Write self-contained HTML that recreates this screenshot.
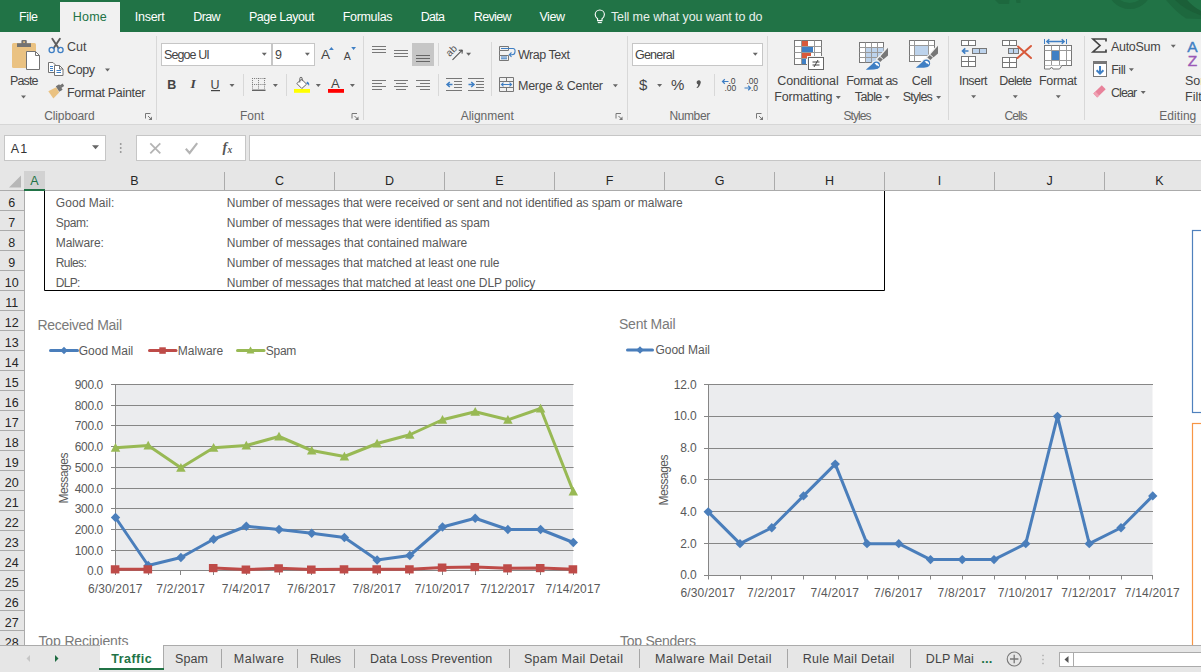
<!DOCTYPE html>
<html><head><meta charset="utf-8"><title>Excel</title>
<style>
html,body{margin:0;padding:0;}
body{width:1201px;height:672px;overflow:hidden;position:relative;background:#fff;font-family:"Liberation Sans",sans-serif;font-size:12px;color:#444;}
.a{position:absolute;}
.t{position:absolute;white-space:nowrap;line-height:16px;}
svg{display:block;}
</style></head><body>
<div id="top" class="a" style="left:0px;top:0px;width:1201px;height:32px;background:#217346;overflow:hidden;">
<svg class="a" style="left:0;top:0" width="1201" height="32" viewBox="0 0 1201 32"><g fill="#1d683e"><path d="M995 0h14.500l-.5 4h-10z"/><path d="M1016 0h4.500v3h-4z"/></g><circle cx="1129.700" cy="-13.500" r="19.500" fill="none" stroke="#1d683e" stroke-width="6"/><path d="M1166 0Q1176 12 1186 18.500L1201 19V11Q1193 7 1187 0z" fill="#1d683e"/><path d="M1175 0Q1185 10 1201 15.500V11Q1193 7 1187 0z" fill="#1b5f38"/><rect x="60" y="2" width="60" height="30" fill="#f1f1f1"/><g fill="none" stroke="#fff" stroke-width="1.1" transform="translate(1.3,1.1)"><path d="M596.3 19.5v-1.8c-1.6-1.2-2.4-2.5-2.4-4.2a4.6 4.6 0 0 1 9.2 0c0 1.7-.8 3-2.4 4.2v1.8z"/><path d="M596.5 21.5h4"/></g></svg>
<div class="t" style="left:19.00px;top:9.00px;font-size:12.5px;letter-spacing:-0.385px;color:#fff;">File</div>
<div class="t" style="left:72.75px;top:9.00px;font-size:12.5px;letter-spacing:0.219px;color:#217346;">Home</div>
<div class="t" style="left:134.75px;top:9.00px;font-size:12.5px;letter-spacing:-0.253px;color:#fff;">Insert</div>
<div class="t" style="left:193.25px;top:9.00px;font-size:12.5px;letter-spacing:-0.641px;color:#fff;">Draw</div>
<div class="t" style="left:248.90px;top:9.00px;font-size:12.5px;letter-spacing:-0.460px;color:#fff;">Page Layout</div>
<div class="t" style="left:342.80px;top:9.00px;font-size:12.5px;letter-spacing:-0.342px;color:#fff;">Formulas</div>
<div class="t" style="left:420.70px;top:9.00px;font-size:12.5px;letter-spacing:-0.735px;color:#fff;">Data</div>
<div class="t" style="left:473.80px;top:9.00px;font-size:12.5px;letter-spacing:-0.660px;color:#fff;">Review</div>
<div class="t" style="left:539.40px;top:9.00px;font-size:12.5px;letter-spacing:-0.392px;color:#fff;">View</div>
<div class="t" style="left:610.90px;top:9.00px;font-size:12.5px;letter-spacing:-0.102px;color:#e8f0eb;">Tell me what you want to do</div>
</div>
<div id="ribbon" class="a" style="left:0px;top:32px;width:1201px;height:93px;background:#f1f1f1;overflow:hidden;">
<svg class="a" style="left:0;top:0" width="1201" height="93" viewBox="0 32 1201 93"><rect x="0" y="124" width="1201" height="1" fill="#d6d6d6"/><rect x="156" y="36" width="1" height="84" fill="#d8d8d8"/><rect x="363" y="36" width="1" height="84" fill="#d8d8d8"/><rect x="627" y="36" width="1" height="84" fill="#d8d8d8"/><rect x="767" y="36" width="1" height="84" fill="#d8d8d8"/><rect x="948" y="36" width="1" height="84" fill="#d8d8d8"/><rect x="1084" y="36" width="1" height="84" fill="#d8d8d8"/><rect x="243" y="74" width="1" height="22" fill="#d8d8d8"/><rect x="286" y="74" width="1" height="22" fill="#d8d8d8"/><rect x="438" y="43" width="1" height="23" fill="#d8d8d8"/><rect x="438" y="74" width="1" height="22" fill="#d8d8d8"/><rect x="491" y="42" width="1" height="54" fill="#d8d8d8"/><rect x="714" y="74" width="1" height="22" fill="#d8d8d8"/><rect x="12" y="43" width="24" height="25" rx="1.5" fill="#eac282"/><path d="M17 43.3h14v3.7h-14z M21.4 41a1 1 0 0 1 1-1h3.4a1 1 0 0 1 1 1v2.5h-5.4z" fill="#737373"/><rect x="23.2" y="41.3" width="1.8" height="1.6" fill="#eac282"/><path d="M26.5 51.5h9l4 4v14h-13z" fill="#fff" stroke="#737373" stroke-width="1"/><path d="M35.5 51.5v4h4" fill="none" stroke="#737373" stroke-width="1"/><path d="M21.00 95.50h5l-2.5 3z" fill="#666"/><g fill="none" stroke-linecap="round"><path d="M52.3 38.7L58.6 48.2M59.9 38.7L53.6 48.2" stroke="#5e5e5e" stroke-width="1.9"/><circle cx="51.7" cy="50" r="2.6" stroke="#3f7fc4" stroke-width="1.3"/><circle cx="60.5" cy="50" r="2.6" stroke="#3f7fc4" stroke-width="1.3"/></g><g fill="#fff" stroke="#737373" stroke-width="1"><path d="M48.5 62.5h4.5l2.5 2.5v7.5h-7z"/><path d="M54.5 65.5h5l3.5 3.5v6.5h-8.5z"/></g><path d="M59.5 65.5v3.5h3.5" fill="none" stroke="#737373" stroke-width="1"/><g stroke="#3f7fc4" stroke-width="1"><path d="M50 66.5h3M50 68.5h3M50 70.5h3M56.5 70.5h4.5M56.5 72.5h4.5"/></g><path d="M105.00 68.50h5l-2.5 3z" fill="#666"/><path d="M48.3 91.2L56.2 87.2L59.2 92.6L53.4 98.6z" fill="#eac282"/><path d="M55.8 86.2l3.4-2l3.4 5.6l-3.4 2z" fill="#737373"/><path d="M59.6 85.4l3-1.9l1.6 2.6l-3 1.9z" fill="#737373"/><path d="M145.50 118.50V113.50H150.50" fill="none" stroke="#777" stroke-width="1"/><path d="M148.00 116.00L151.50 119.50" stroke="#777" stroke-width="1"/><path d="M152.00 116.50V120.00H148.50z" fill="#777"/><rect x="161.5" y="43.5" width="110" height="22" fill="#fff" stroke="#c6c6c6"/><rect x="272.5" y="43.5" width="42" height="22" fill="#fff" stroke="#c6c6c6"/><path d="M261.80 52.80h5l-2.5 3z" fill="#666"/><path d="M304.90 52.80h5l-2.5 3z" fill="#666"/><path d="M329 50l2.4-3l2.4 3z" fill="#3f7fc4"/><path d="M351.2 47h4.8l-2.4 3z" fill="#3f7fc4"/><rect x="211" y="90" width="9" height="1.2" fill="#444"/><path d="M229.50 84.00h5l-2.5 3z" fill="#666"/><g stroke="#777" stroke-width="1" stroke-dasharray="1 1.1"><path d="M252 78.5h13.5"/><path d="M252 84.5h13.5"/><path d="M252.5 78v11"/><path d="M258.5 78v11"/><path d="M264.5 78v11"/></g><rect x="252" y="89.6" width="13.5" height="1.3" fill="#555"/><path d="M272.90 84.00h5l-2.5 3z" fill="#666"/><rect x="294" y="89" width="16" height="3.8" fill="#ffff00"/><path d="M301.6 79.2l5 5l-4.8 4.3l-5-5z" fill="#fff" stroke="#666" stroke-width="1"/><path d="M299.8 82.5v-4a1.2 1.2 0 0 1 2.4 0v2.6" fill="none" stroke="#666" stroke-width="1"/><path d="M307 81.5c2 .6 2.8 2.4 2 4.6c-.4-1.4-1.2-2.2-2.6-2.6z" fill="#3f7fc4"/><path d="M315.80 84.00h5l-2.5 3z" fill="#666"/><rect x="328" y="89" width="16" height="3.8" fill="#ff0000"/><path d="M349.90 84.00h5l-2.5 3z" fill="#666"/><path d="M352.00 118.50V113.50H357.00" fill="none" stroke="#777" stroke-width="1"/><path d="M354.50 116.00L358.00 119.50" stroke="#777" stroke-width="1"/><path d="M358.50 116.50V120.00H355.00z" fill="#777"/><rect x="372" y="46.0" width="14" height="1" fill="#777"/><rect x="372" y="49.0" width="14" height="1" fill="#777"/><rect x="372" y="52.0" width="14" height="1" fill="#777"/><rect x="394" y="50.0" width="14" height="1" fill="#777"/><rect x="394" y="53.0" width="14" height="1" fill="#777"/><rect x="394" y="56.0" width="14" height="1" fill="#777"/><rect x="412" y="43" width="22" height="23" fill="#c6c6c6"/><rect x="416" y="55.0" width="14" height="1" fill="#666"/><rect x="416" y="58.0" width="14" height="1" fill="#666"/><rect x="416" y="61.0" width="14" height="1" fill="#666"/><rect x="372" y="80.0" width="14" height="1" fill="#777"/><rect x="394" y="80.0" width="14" height="1" fill="#777"/><rect x="416" y="80.0" width="14" height="1" fill="#777"/><rect x="372" y="83.0" width="10" height="1" fill="#777"/><rect x="396" y="83.0" width="10" height="1" fill="#777"/><rect x="420" y="83.0" width="10" height="1" fill="#777"/><rect x="372" y="86.0" width="14" height="1" fill="#777"/><rect x="394" y="86.0" width="14" height="1" fill="#777"/><rect x="416" y="86.0" width="14" height="1" fill="#777"/><rect x="372" y="89.0" width="10" height="1" fill="#777"/><rect x="396" y="89.0" width="10" height="1" fill="#777"/><rect x="420" y="89.0" width="10" height="1" fill="#777"/><path d="M452.5 59.8L462.2 50.2M462.4 50l-3.6.4M462.4 50l-.4 3.6" stroke="#555" stroke-width="1.1" fill="none"/><path d="M466.10 52.80h5l-2.5 3z" fill="#666"/><rect x="446" y="78.0" width="16" height="1" fill="#777"/><rect x="446" y="90.0" width="16" height="1" fill="#777"/><rect x="454" y="81.0" width="8" height="1" fill="#777"/><rect x="454" y="84.0" width="8" height="1" fill="#777"/><rect x="454" y="87.0" width="8" height="1" fill="#777"/><path d="M452.5 84.5h-5.5M449.8 82l-2.8 2.5l2.8 2.5" stroke="#3f7fc4" stroke-width="1.5" fill="none"/><rect x="468" y="78.0" width="16" height="1" fill="#777"/><rect x="468" y="90.0" width="16" height="1" fill="#777"/><rect x="476" y="81.0" width="8" height="1" fill="#777"/><rect x="476" y="84.0" width="8" height="1" fill="#777"/><rect x="476" y="87.0" width="8" height="1" fill="#777"/><path d="M468.5 84.5h5.5M471.2 82l2.8 2.5l-2.8 2.5" stroke="#3f7fc4" stroke-width="1.5" fill="none"/><g fill="none" stroke="#777" stroke-width="1"><path d="M499.5 46.5h9v4h-9zM499.5 55.5h9v5h-9zM499.5 50.5v5"/></g><g fill="none" stroke="#3f7fc4" stroke-width="1.1"><path d="M501 48.5h12.2a1.8 1.8 0 0 1 1.8 1.8v1.4a3 3 0 0 1-3 3h-2.5M511.5 52.5l-2.2 2.2l2.2 2.2M501 57h6M501 58.8h6"/></g><g fill="none" stroke="#777" stroke-width="1"><path d="M499.5 77.5h14v14h-14zM499.5 81.5h14M499.5 87.5h14M506.5 77.5v4M506.5 87.5v4"/></g><path d="M501.5 84.5h10M503.5 82.7l-2 1.8l2 1.8M509.5 82.7l2 1.8l-2 1.8" fill="none" stroke="#3f7fc4" stroke-width="1.1"/><path d="M612.90 84.20h5l-2.5 3z" fill="#666"/><path d="M616.00 118.50V113.50H621.00" fill="none" stroke="#777" stroke-width="1"/><path d="M618.50 116.00L622.00 119.50" stroke="#777" stroke-width="1"/><path d="M622.50 116.50V120.00H619.00z" fill="#777"/><rect x="632.5" y="43.5" width="130" height="22" fill="#fff" stroke="#c6c6c6"/><path d="M752.80 52.80h5l-2.5 3z" fill="#666"/><path d="M657.10 84.00h5l-2.5 3z" fill="#666"/><path d="M696.600 82.300a2.100 2.100 0 1 1 3.900 1.100c-.4 1.900-1.400 3.400-3.100 4.700h-1.100c1.200-1.300 1.800-2.500 1.900-3.700a2.100 2.100 0 0 1-1.600-2.100z" fill="#555"/><path d="M722.5 81.5h6M724.8 79.3l-2.300 2.200l2.300 2.200" fill="none" stroke="#3f7fc4" stroke-width="1.2"/><path d="M744.5 88h6M748.2 85.800l2.300 2.200l-2.300 2.200" fill="none" stroke="#3f7fc4" stroke-width="1.2"/><path d="M756.50 118.50V113.50H761.50" fill="none" stroke="#777" stroke-width="1"/><path d="M759.00 116.00L762.50 119.50" stroke="#777" stroke-width="1"/><path d="M763.00 116.50V120.00H759.50z" fill="#777"/><rect x="794.5" y="40.500" width="27" height="24" fill="#fff" stroke="#777"/><path d="M794.500 46.5h27" stroke="#999" stroke-width="1"/><path d="M794.500 52.5h27" stroke="#999" stroke-width="1"/><path d="M794.500 58.5h27" stroke="#999" stroke-width="1"/><path d="M801.5 40.500v24" stroke="#999" stroke-width="1"/><path d="M814.5 40.500v24" stroke="#999" stroke-width="1"/><rect x="802" y="41" width="6" height="5" fill="#d8593a"/><rect x="802" y="47" width="11" height="5" fill="#3f7fc4"/><rect x="802" y="53" width="9" height="5" fill="#d8593a"/><rect x="802" y="59" width="4" height="5" fill="#3f7fc4"/><rect x="807" y="56" width="18" height="15" fill="#f1f1f1"/><rect x="808.500" y="57.500" width="15" height="12" fill="#fff" stroke="#666"/><path d="M812.500 62h7M812.500 65h7M818 60l-4 7" stroke="#444" stroke-width="1" fill="none"/><path d="M835.80 96.00h5l-2.5 3z" fill="#666"/><rect x="859.500" y="42.500" width="24" height="20" fill="#fff" stroke="#777"/><rect x="866" y="47" width="17.500" height="15" fill="#bdd3ec"/><path d="M859.500 47.5h24" stroke="#999" stroke-width="1"/><path d="M859.500 52.5h24" stroke="#999" stroke-width="1"/><path d="M859.500 57.5h24" stroke="#999" stroke-width="1"/><path d="M865.5 42.500v20" stroke="#999" stroke-width="1"/><path d="M871.5 42.500v20" stroke="#999" stroke-width="1"/><path d="M877.5 42.500v20" stroke="#999" stroke-width="1"/><g transform="translate(0,0)"><g fill="#f1f1f1" stroke="#f1f1f1" stroke-width="2.600" stroke-linejoin="round"><path d="M888 47.700V55.400L883.300 59.500L880.300 62L877.300 59.300L880.300 56.500Z"/><path d="M865.800 69.700L874 62.400L878 68.600Z"/><circle cx="876.400" cy="65.100" r="3.600"/><path d="M885.300 55V64.500H879.500z" stroke="none"/></g><path d="M865.800 69.700L874 62.400L878 68.800Q874 69.900 865.800 69.700Z" fill="#3f7fc4"/><circle cx="876.400" cy="65.100" r="3.700" fill="#3f7fc4"/><path d="M874.500 63.700a2.700 2.700 0 0 1 4.400 2.900c-.7-1-1.500-1.300-2.300-1.100c-.3-.9-1.100-1.600-2.100-1.800z" fill="#fff"/><path d="M888 47.700V55.400L883.300 59.500L880.300 56.500Z" fill="#777"/><path d="M877.300 59.300L880 56.700L883.200 59.100L880.300 62Z" fill="#777"/><path d="M879.600 56.200L883.600 59.700" stroke="#f1f1f1" stroke-width=".9"/></g><path d="M884.80 96.00h5l-2.5 3z" fill="#666"/><rect x="909.500" y="40.500" width="25" height="21" fill="#fff" stroke="#777"/><path d="M909.500 45.5h25" stroke="#999" stroke-width="1"/><path d="M909.500 55.5h25" stroke="#999" stroke-width="1"/><path d="M914.5 40.500v21" stroke="#999" stroke-width="1"/><path d="M928.5 40.500v21" stroke="#999" stroke-width="1"/><rect x="915" y="46" width="13" height="9" fill="#bdd3ec"/><g transform="translate(50,-1.9)"><g fill="#f1f1f1" stroke="#f1f1f1" stroke-width="2.600" stroke-linejoin="round"><path d="M888 47.700V55.400L883.300 59.500L880.300 62L877.300 59.300L880.300 56.500Z"/><path d="M865.800 69.700L874 62.400L878 68.600Z"/><circle cx="876.400" cy="65.100" r="3.600"/><path d="M885.300 55V64.500H879.500z" stroke="none"/></g><path d="M865.800 69.700L874 62.400L878 68.800Q874 69.900 865.800 69.700Z" fill="#3f7fc4"/><circle cx="876.400" cy="65.100" r="3.700" fill="#3f7fc4"/><path d="M874.500 63.700a2.700 2.700 0 0 1 4.400 2.900c-.7-1-1.500-1.300-2.300-1.100c-.3-.9-1.100-1.600-2.100-1.800z" fill="#fff"/><path d="M888 47.700V55.400L883.300 59.500L880.300 56.500Z" fill="#777"/><path d="M877.300 59.300L880 56.700L883.200 59.100L880.300 62Z" fill="#777"/><path d="M879.600 56.200L883.600 59.700" stroke="#f1f1f1" stroke-width=".9"/></g><path d="M936.10 96.00h5l-2.5 3z" fill="#666"/><rect x="961.5" y="40.5" width="14" height="5" fill="#fff" stroke="#777"/><path d="M968.5 40.5v5" stroke="#777"/><rect x="972.5" y="48.5" width="14" height="5" fill="#bdd3ec" stroke="#777"/><path d="M979.5 48.5v5" stroke="#777"/><rect x="961.5" y="56.5" width="14" height="10" fill="#fff" stroke="#777"/><path d="M968.5 56.5v10" stroke="#777"/><path d="M961.5 61.5h14" stroke="#777"/><path d="M962.500 51h6M965.300 48.300l-2.800 2.700l2.800 2.700" fill="none" stroke="#3f7fc4" stroke-width="1.600"/><rect x="1002.5" y="40.5" width="14" height="5" fill="#fff" stroke="#777"/><path d="M1009.5 40.5v5" stroke="#777"/><rect x="1008.5" y="48.5" width="10" height="5" fill="#bdd3ec" stroke="#777"/><path d="M1013.5 48.5v5" stroke="#777"/><rect x="1002.5" y="57.5" width="14" height="10" fill="#fff" stroke="#777"/><path d="M1009.5 57.5v10" stroke="#777"/><path d="M1002.5 62.5h14" stroke="#777"/><path d="M1017.500 58l13.500-12M1018 46.500l13 11.500" stroke="#d8593a" stroke-width="2" fill="none" stroke-linecap="round"/><path d="M1044.500 39v5M1066.500 39v5" fill="none" stroke="#3f7fc4" stroke-width="1"/><path d="M1047 41.500h17M1049.300 39.200l-2.500 2.300l2.500 2.300M1061.700 39.200l2.500 2.300l-2.500 2.300" fill="none" stroke="#3f7fc4" stroke-width="1.400"/><rect x="1044.500" y="45.500" width="27" height="20" fill="#fff" stroke="#777"/><path d="M1051.500 45.500v20M1059.500 45.500v20M1066.500 45.500v20M1044.500 50.500h27M1044.500 60.500h27" stroke="#999"/><rect x="1052" y="51" width="7" height="9" fill="#3f7fc4"/><path d="M1044.500 65.500v3.500h5.500l1.500-2l1.500 2h6.500l2.500-3.500" fill="#fff" stroke="#777"/><path d="M971.10 95.30h5l-2.5 3z" fill="#666"/><path d="M1012.80 95.30h5l-2.5 3z" fill="#666"/><path d="M1055.80 95.30h5l-2.5 3z" fill="#666"/><path d="M1106 41.500v-2.500h-13l7 6.500l-7 6.500h13v-2.500" fill="none" stroke="#444" stroke-width="1.700"/><path d="M1170.80 44.80h5l-2.5 3z" fill="#666"/><rect x="1093.500" y="61.500" width="13" height="15" fill="#fff" stroke="#777"/><rect x="1093" y="61" width="14" height="3" fill="#777"/><path d="M1100 66v7.500M1096.600 70.300l3.400 3.400l3.400-3.400" fill="none" stroke="#3f7fc4" stroke-width="2"/><path d="M1128.90 68.20h5l-2.5 3z" fill="#666"/><path d="M1093.300 93.500l8.500-8.200l3.900 4l-8.500 8.200z" fill="#e8829a"/><path d="M1093.300 93.500l2.200-2.100l3.900 4l-2.200 2.100z" fill="#f0a0b2"/><path d="M1140.70 91.00h5l-2.5 3z" fill="#666"/></svg>
<div class="t" style="left:10.00px;top:41.00px;font-size:12.5px;letter-spacing:-0.867px;color:#444;">Paste</div>
<div class="t" style="left:67.00px;top:7.00px;font-size:12.5px;letter-spacing:0.023px;color:#444;">Cut</div>
<div class="t" style="left:67.00px;top:30.00px;font-size:12.5px;letter-spacing:-0.396px;color:#444;">Copy</div>
<div class="t" style="left:67.00px;top:53.00px;font-size:12.5px;letter-spacing:-0.321px;color:#444;">Format Painter</div>
<div class="t" style="left:44.20px;top:76.00px;font-size:12px;letter-spacing:-0.109px;color:#666;">Clipboard</div>
<div class="t" style="left:164.00px;top:14.90px;font-size:12.5px;letter-spacing:-0.904px;color:#444;">Segoe UI</div>
<div class="t" style="left:275.00px;top:14.90px;font-size:12.5px;color:#444;">9</div>
<div class="t" style="left:167.20px;top:44.70px;font-size:12.5px;color:#444;font-weight:bold;">B</div>
<div class="t" style="left:190.50px;top:44.20px;font-size:13.5px;color:#444;font-weight:bold;font-style:italic;font-family:'Liberation Serif',serif;">I</div>
<div class="t" style="left:210.60px;top:44.70px;font-size:12.5px;color:#444;">U</div>
<div class="t" style="left:321.00px;top:15.10px;font-size:13.5px;color:#444;">A</div>
<div class="t" style="left:343.70px;top:15.60px;font-size:10.5px;color:#444;">A</div>
<div class="t" style="left:331.00px;top:43.90px;font-size:13px;color:#444;">A</div>
<div class="t" style="left:240.00px;top:75.80px;font-size:12px;letter-spacing:-0.005px;color:#666;">Font</div>
<div class="t" style="left:0.00px;top:-43.50px;font-size:10px;color:#555;left:446px;top:10.5px;transform:rotate(-45deg);transform-origin:50% 50%;">ab</div>
<div class="t" style="left:518.00px;top:14.70px;font-size:12.5px;letter-spacing:-0.477px;color:#444;">Wrap Text</div>
<div class="t" style="left:518.00px;top:45.90px;font-size:12.5px;letter-spacing:-0.249px;color:#444;">Merge &amp; Center</div>
<div class="t" style="left:460.80px;top:75.60px;font-size:12px;letter-spacing:-0.047px;color:#666;">Alignment</div>
<div class="t" style="left:635.00px;top:14.90px;font-size:12.5px;letter-spacing:-0.781px;color:#444;">General</div>
<div class="t" style="left:639.00px;top:44.50px;font-size:15px;color:#444;">$</div>
<div class="t" style="left:671.00px;top:45.10px;font-size:15px;color:#444;">%</div>
<div class="t" style="left:728.50px;top:41.00px;font-size:8.5px;color:#444;">.0</div>
<div class="t" style="left:724.50px;top:48.00px;font-size:8.5px;color:#444;">.00</div>
<div class="t" style="left:746.50px;top:41.00px;font-size:8.5px;color:#444;">.00</div>
<div class="t" style="left:751.00px;top:48.00px;font-size:8.5px;color:#444;">.0</div>
<div class="t" style="left:669.40px;top:75.60px;font-size:12px;letter-spacing:-0.378px;color:#666;">Number</div>
<div class="t" style="left:777.25px;top:41.00px;font-size:12.5px;letter-spacing:-0.105px;color:#444;">Conditional</div>
<div class="t" style="left:774.20px;top:56.80px;font-size:12.5px;letter-spacing:-0.172px;color:#444;">Formatting</div>
<div class="t" style="left:846.30px;top:41.00px;font-size:12.5px;letter-spacing:-0.558px;color:#444;">Format as</div>
<div class="t" style="left:854.80px;top:56.80px;font-size:12.5px;letter-spacing:-0.598px;color:#444;">Table</div>
<div class="t" style="left:911.85px;top:41.00px;font-size:12.5px;letter-spacing:-0.416px;color:#444;">Cell</div>
<div class="t" style="left:902.80px;top:56.80px;font-size:12.5px;letter-spacing:-0.809px;color:#444;">Styles</div>
<div class="t" style="left:843.40px;top:75.60px;font-size:12px;letter-spacing:-0.898px;color:#666;">Styles</div>
<div class="t" style="left:959.00px;top:40.90px;font-size:12.5px;letter-spacing:-0.533px;color:#444;">Insert</div>
<div class="t" style="left:999.30px;top:40.90px;font-size:12.5px;letter-spacing:-0.688px;color:#444;">Delete</div>
<div class="t" style="left:1039.00px;top:40.90px;font-size:12.5px;letter-spacing:-0.319px;color:#444;">Format</div>
<div class="t" style="left:1004.40px;top:75.60px;font-size:12px;letter-spacing:-0.868px;color:#666;">Cells</div>
<div class="t" style="left:1111.00px;top:7.00px;font-size:12.5px;letter-spacing:-0.304px;color:#444;">AutoSum</div>
<div class="t" style="left:1111.20px;top:29.90px;font-size:12.5px;letter-spacing:-0.456px;color:#444;">Fill</div>
<div class="t" style="left:1111.00px;top:53.00px;font-size:12.5px;letter-spacing:-0.919px;color:#444;">Clear</div>
<div class="t" style="left:1187.20px;top:7.10px;font-size:15.5px;color:#3f7fc4;-webkit-text-stroke:.4px #3f7fc4;">A</div>
<div class="t" style="left:1187.80px;top:21.30px;font-size:15.5px;color:#9b59b6;-webkit-text-stroke:.4px #9b59b6;">Z</div>
<div class="t" style="left:1185.00px;top:40.80px;font-size:12.5px;color:#444;">Sort</div>
<div class="t" style="left:1185.00px;top:57.00px;font-size:12.5px;color:#444;">Filter</div>
<div class="t" style="left:1159.30px;top:76.00px;font-size:12px;letter-spacing:0.049px;color:#666;">Editing</div>
</div>
<div id="fbar" class="a" style="left:0px;top:125px;width:1201px;height:46px;background:#e6e6e6;overflow:hidden;">
<svg class="a" style="left:0;top:0" width="1201" height="46" viewBox="0 125 1201 46"><rect x="4.500" y="135.500" width="101" height="25" fill="#fff" stroke="#c6c6c6"/><rect x="136.500" y="135.500" width="109" height="25" fill="#fff" stroke="#c6c6c6"/><rect x="249.500" y="135.500" width="960" height="25" fill="#fff" stroke="#c6c6c6"/><path d="M92 145.300h7l-3.500 4z" fill="#666"/><rect x="119.900" y="143.2" width="1.600" height="1.600" fill="#8c8c8c"/><rect x="119.900" y="147.2" width="1.600" height="1.600" fill="#8c8c8c"/><rect x="119.900" y="151.2" width="1.600" height="1.600" fill="#8c8c8c"/><path d="M150.300 143.300l10 10M160.300 143.300l-10 10" stroke="#b4b4b4" stroke-width="1.800" fill="none"/><path d="M185.800 148.800l3.800 4.200l7.600-9.800" stroke="#b4b4b4" stroke-width="2.100" fill="none"/></svg>
<div class="t" style="left:10.70px;top:15.60px;font-size:12.5px;letter-spacing:1.303px;color:#333;">A1</div>
<div class="t" style="left:222.50px;top:15.00px;font-size:14px;color:#555;font-weight:bold;font-style:italic;font-family:'Liberation Serif',serif;">f</div>
<div class="t" style="left:227.50px;top:17.00px;font-size:9.5px;color:#555;font-weight:bold;font-style:italic;font-family:'Liberation Serif',serif;">x</div>
</div>
<div id="colh" class="a" style="left:0px;top:171px;width:1201px;height:20px;background:#e6e6e6;overflow:hidden;">
<svg class="a" style="left:0;top:0" width="1201" height="20" viewBox="0 171 1201 20"><rect x="0" y="190" width="1201" height="1" fill="#ababab"/><rect x="24" y="171" width="21" height="18" fill="#d2d2d2"/><rect x="24" y="189" width="21" height="2" fill="#217346"/><path d="M21 175.500v12h-12z" fill="#b7b7b7"/><rect x="224" y="172" width="1" height="18" fill="#ababab"/><rect x="334" y="172" width="1" height="18" fill="#ababab"/><rect x="444" y="172" width="1" height="18" fill="#ababab"/><rect x="554" y="172" width="1" height="18" fill="#ababab"/><rect x="664" y="172" width="1" height="18" fill="#ababab"/><rect x="774" y="172" width="1" height="18" fill="#ababab"/><rect x="884" y="172" width="1" height="18" fill="#ababab"/><rect x="994" y="172" width="1" height="18" fill="#ababab"/><rect x="1104" y="172" width="1" height="18" fill="#ababab"/></svg>
<div class="t" style="left:30.33px;top:2.00px;font-size:12.5px;color:#217346;">A</div>
<div class="t" style="left:130.33px;top:2.00px;font-size:12.5px;color:#262626;">B</div>
<div class="t" style="left:274.98px;top:2.00px;font-size:12.5px;color:#262626;">C</div>
<div class="t" style="left:384.98px;top:2.00px;font-size:12.5px;color:#262626;">D</div>
<div class="t" style="left:495.33px;top:2.00px;font-size:12.5px;color:#262626;">E</div>
<div class="t" style="left:605.68px;top:2.00px;font-size:12.5px;color:#262626;">F</div>
<div class="t" style="left:714.63px;top:2.00px;font-size:12.5px;color:#262626;">G</div>
<div class="t" style="left:824.98px;top:2.00px;font-size:12.5px;color:#262626;">H</div>
<div class="t" style="left:937.76px;top:2.00px;font-size:12.5px;color:#262626;">I</div>
<div class="t" style="left:1046.38px;top:2.00px;font-size:12.5px;color:#262626;">J</div>
<div class="t" style="left:1155.33px;top:2.00px;font-size:12.5px;color:#262626;">K</div>
</div>
<div id="rowh" class="a" style="left:0px;top:191px;width:25px;height:454px;background:#e6e6e6;overflow:hidden;">
<svg class="a" style="left:0;top:0" width="25" height="454" viewBox="0 191 25 454"><rect x="24" y="191" width="1" height="454" fill="#ababab"/><rect x="0" y="210" width="24" height="1" fill="#ababab"/><rect x="0" y="230" width="24" height="1" fill="#ababab"/><rect x="0" y="250" width="24" height="1" fill="#ababab"/><rect x="0" y="270" width="24" height="1" fill="#ababab"/><rect x="0" y="290" width="24" height="1" fill="#ababab"/><rect x="0" y="310" width="24" height="1" fill="#ababab"/><rect x="0" y="330" width="24" height="1" fill="#ababab"/><rect x="0" y="350" width="24" height="1" fill="#ababab"/><rect x="0" y="370" width="24" height="1" fill="#ababab"/><rect x="0" y="390" width="24" height="1" fill="#ababab"/><rect x="0" y="410" width="24" height="1" fill="#ababab"/><rect x="0" y="430" width="24" height="1" fill="#ababab"/><rect x="0" y="450" width="24" height="1" fill="#ababab"/><rect x="0" y="470" width="24" height="1" fill="#ababab"/><rect x="0" y="490" width="24" height="1" fill="#ababab"/><rect x="0" y="510" width="24" height="1" fill="#ababab"/><rect x="0" y="530" width="24" height="1" fill="#ababab"/><rect x="0" y="550" width="24" height="1" fill="#ababab"/><rect x="0" y="570" width="24" height="1" fill="#ababab"/><rect x="0" y="590" width="24" height="1" fill="#ababab"/><rect x="0" y="610" width="24" height="1" fill="#ababab"/><rect x="0" y="630" width="24" height="1" fill="#ababab"/><rect x="0" y="650" width="24" height="1" fill="#ababab"/></svg>
<div class="t" style="left:8.32px;top:3.70px;font-size:12.5px;color:#262626;">6</div>
<div class="t" style="left:8.32px;top:23.70px;font-size:12.5px;color:#262626;">7</div>
<div class="t" style="left:8.32px;top:43.70px;font-size:12.5px;color:#262626;">8</div>
<div class="t" style="left:8.32px;top:63.70px;font-size:12.5px;color:#262626;">9</div>
<div class="t" style="left:4.85px;top:83.70px;font-size:12.5px;color:#262626;">10</div>
<div class="t" style="left:5.31px;top:103.70px;font-size:12.5px;color:#262626;">11</div>
<div class="t" style="left:4.85px;top:123.70px;font-size:12.5px;color:#262626;">12</div>
<div class="t" style="left:4.85px;top:143.70px;font-size:12.5px;color:#262626;">13</div>
<div class="t" style="left:4.85px;top:163.70px;font-size:12.5px;color:#262626;">14</div>
<div class="t" style="left:4.85px;top:183.70px;font-size:12.5px;color:#262626;">15</div>
<div class="t" style="left:4.85px;top:203.70px;font-size:12.5px;color:#262626;">16</div>
<div class="t" style="left:4.85px;top:223.70px;font-size:12.5px;color:#262626;">17</div>
<div class="t" style="left:4.85px;top:243.70px;font-size:12.5px;color:#262626;">18</div>
<div class="t" style="left:4.85px;top:263.70px;font-size:12.5px;color:#262626;">19</div>
<div class="t" style="left:4.85px;top:283.70px;font-size:12.5px;color:#262626;">20</div>
<div class="t" style="left:4.85px;top:303.70px;font-size:12.5px;color:#262626;">21</div>
<div class="t" style="left:4.85px;top:323.70px;font-size:12.5px;color:#262626;">22</div>
<div class="t" style="left:4.85px;top:343.70px;font-size:12.5px;color:#262626;">23</div>
<div class="t" style="left:4.85px;top:363.70px;font-size:12.5px;color:#262626;">24</div>
<div class="t" style="left:4.85px;top:383.70px;font-size:12.5px;color:#262626;">25</div>
<div class="t" style="left:4.85px;top:403.70px;font-size:12.5px;color:#262626;">26</div>
<div class="t" style="left:4.85px;top:423.70px;font-size:12.5px;color:#262626;">27</div>
<div class="t" style="left:4.85px;top:443.70px;font-size:12.5px;color:#262626;">28</div>
</div>
<div id="sheet" class="a" style="left:25px;top:191px;width:1176px;height:454px;background:#fff;overflow:hidden;">
<svg class="a" style="left:0;top:0" width="1176" height="454" viewBox="25 191 1176 454"><rect x="115" y="384" width="458" height="187" fill="#ebecee"/><line x1="111" x2="573.6" y1="384.50" y2="384.50" stroke="#868686" stroke-width="1"/><line x1="111" x2="573.6" y1="405.50" y2="405.50" stroke="#868686" stroke-width="1"/><line x1="111" x2="573.6" y1="425.50" y2="425.50" stroke="#868686" stroke-width="1"/><line x1="111" x2="573.6" y1="446.50" y2="446.50" stroke="#868686" stroke-width="1"/><line x1="111" x2="573.6" y1="467.50" y2="467.50" stroke="#868686" stroke-width="1"/><line x1="111" x2="573.6" y1="488.50" y2="488.50" stroke="#868686" stroke-width="1"/><line x1="111" x2="573.6" y1="508.50" y2="508.50" stroke="#868686" stroke-width="1"/><line x1="111" x2="573.6" y1="529.50" y2="529.50" stroke="#868686" stroke-width="1"/><line x1="111" x2="573.6" y1="550.50" y2="550.50" stroke="#868686" stroke-width="1"/><line x1="111" x2="573.6" y1="570.50" y2="570.50" stroke="#868686" stroke-width="1"/><line x1="115.5" x2="115.5" y1="384" y2="571" stroke="#868686" stroke-width="1"/><line x1="115.5" x2="115.5" y1="571" y2="575" stroke="#868686" stroke-width="1"/><line x1="148.5" x2="148.5" y1="571" y2="575" stroke="#868686" stroke-width="1"/><line x1="180.5" x2="180.5" y1="571" y2="575" stroke="#868686" stroke-width="1"/><line x1="213.5" x2="213.5" y1="571" y2="575" stroke="#868686" stroke-width="1"/><line x1="246.5" x2="246.5" y1="571" y2="575" stroke="#868686" stroke-width="1"/><line x1="279.5" x2="279.5" y1="571" y2="575" stroke="#868686" stroke-width="1"/><line x1="311.5" x2="311.5" y1="571" y2="575" stroke="#868686" stroke-width="1"/><line x1="344.5" x2="344.5" y1="571" y2="575" stroke="#868686" stroke-width="1"/><line x1="377.5" x2="377.5" y1="571" y2="575" stroke="#868686" stroke-width="1"/><line x1="409.5" x2="409.5" y1="571" y2="575" stroke="#868686" stroke-width="1"/><line x1="442.5" x2="442.5" y1="571" y2="575" stroke="#868686" stroke-width="1"/><line x1="475.5" x2="475.5" y1="571" y2="575" stroke="#868686" stroke-width="1"/><line x1="507.5" x2="507.5" y1="571" y2="575" stroke="#868686" stroke-width="1"/><line x1="540.5" x2="540.5" y1="571" y2="575" stroke="#868686" stroke-width="1"/><line x1="573.5" x2="573.5" y1="571" y2="575" stroke="#868686" stroke-width="1"/><polyline points="115.50,447.75 148.20,445.50 180.90,467.75 213.60,447.75 246.30,445.50 279.00,436.50 311.70,450.50 344.40,456.50 377.10,443.50 409.80,434.75 442.50,419.75 475.20,411.75 507.90,419.75 540.60,408.50 573.30,491.50" fill="none" stroke="#98b954" stroke-width="3" stroke-linejoin="round" stroke-linecap="round"/><path d="M115.50 443.05l4.75 8.8h-9.5z" fill="#98b954"/><path d="M148.20 440.80l4.75 8.8h-9.5z" fill="#98b954"/><path d="M180.90 463.05l4.75 8.8h-9.5z" fill="#98b954"/><path d="M213.60 443.05l4.75 8.8h-9.5z" fill="#98b954"/><path d="M246.30 440.80l4.75 8.8h-9.5z" fill="#98b954"/><path d="M279.00 431.80l4.75 8.8h-9.5z" fill="#98b954"/><path d="M311.70 445.80l4.75 8.8h-9.5z" fill="#98b954"/><path d="M344.40 451.80l4.75 8.8h-9.5z" fill="#98b954"/><path d="M377.10 438.80l4.75 8.8h-9.5z" fill="#98b954"/><path d="M409.80 430.05l4.75 8.8h-9.5z" fill="#98b954"/><path d="M442.50 415.05l4.75 8.8h-9.5z" fill="#98b954"/><path d="M475.20 407.05l4.75 8.8h-9.5z" fill="#98b954"/><path d="M507.90 415.05l4.75 8.8h-9.5z" fill="#98b954"/><path d="M540.60 403.80l4.75 8.8h-9.5z" fill="#98b954"/><path d="M573.30 486.80l4.75 8.8h-9.5z" fill="#98b954"/><polyline points="115.50,517.50 148.20,565.50 180.90,557.50 213.60,539.25 246.30,526.25 279.00,529.50 311.70,533.25 344.40,537.50 377.10,560.00 409.80,555.50 442.50,527.00 475.20,518.25 507.90,529.50 540.60,529.50 573.30,542.50" fill="none" stroke="#4a7ebb" stroke-width="3" stroke-linejoin="round" stroke-linecap="round"/><path d="M115.50 512.80l4.7 4.7l-4.7 4.7l-4.7-4.7z" fill="#4a7ebb"/><path d="M148.20 560.80l4.7 4.7l-4.7 4.7l-4.7-4.7z" fill="#4a7ebb"/><path d="M180.90 552.80l4.7 4.7l-4.7 4.7l-4.7-4.7z" fill="#4a7ebb"/><path d="M213.60 534.55l4.7 4.7l-4.7 4.7l-4.7-4.7z" fill="#4a7ebb"/><path d="M246.30 521.55l4.7 4.7l-4.7 4.7l-4.7-4.7z" fill="#4a7ebb"/><path d="M279.00 524.80l4.7 4.7l-4.7 4.7l-4.7-4.7z" fill="#4a7ebb"/><path d="M311.70 528.55l4.7 4.7l-4.7 4.7l-4.7-4.7z" fill="#4a7ebb"/><path d="M344.40 532.80l4.7 4.7l-4.7 4.7l-4.7-4.7z" fill="#4a7ebb"/><path d="M377.10 555.30l4.7 4.7l-4.7 4.7l-4.7-4.7z" fill="#4a7ebb"/><path d="M409.80 550.80l4.7 4.7l-4.7 4.7l-4.7-4.7z" fill="#4a7ebb"/><path d="M442.50 522.30l4.7 4.7l-4.7 4.7l-4.7-4.7z" fill="#4a7ebb"/><path d="M475.20 513.55l4.7 4.7l-4.7 4.7l-4.7-4.7z" fill="#4a7ebb"/><path d="M507.90 524.80l4.7 4.7l-4.7 4.7l-4.7-4.7z" fill="#4a7ebb"/><path d="M540.60 524.80l4.7 4.7l-4.7 4.7l-4.7-4.7z" fill="#4a7ebb"/><path d="M573.30 537.80l4.7 4.7l-4.7 4.7l-4.7-4.7z" fill="#4a7ebb"/><polyline points="115.50,569.25 148.20,569.25" fill="none" stroke="#be4b48" stroke-width="3" stroke-linejoin="round" stroke-linecap="round"/><polyline points="213.60,568.00 246.30,569.50 279.00,568.25 311.70,569.50 344.40,569.25 377.10,569.25 409.80,569.25 442.50,567.50 475.20,567.00 507.90,568.25 540.60,568.00 573.30,569.25" fill="none" stroke="#be4b48" stroke-width="3" stroke-linejoin="round" stroke-linecap="round"/><rect x="110.80" y="565.25" width="8.6" height="8.2" fill="#be4b48"/><rect x="143.50" y="565.25" width="8.6" height="8.2" fill="#be4b48"/><rect x="208.90" y="564.00" width="8.6" height="8.2" fill="#be4b48"/><rect x="241.60" y="565.50" width="8.6" height="8.2" fill="#be4b48"/><rect x="274.30" y="564.25" width="8.6" height="8.2" fill="#be4b48"/><rect x="307.00" y="565.50" width="8.6" height="8.2" fill="#be4b48"/><rect x="339.70" y="565.25" width="8.6" height="8.2" fill="#be4b48"/><rect x="372.40" y="565.25" width="8.6" height="8.2" fill="#be4b48"/><rect x="405.10" y="565.25" width="8.6" height="8.2" fill="#be4b48"/><rect x="437.80" y="563.50" width="8.6" height="8.2" fill="#be4b48"/><rect x="470.50" y="563.00" width="8.6" height="8.2" fill="#be4b48"/><rect x="503.20" y="564.25" width="8.6" height="8.2" fill="#be4b48"/><rect x="535.90" y="564.00" width="8.6" height="8.2" fill="#be4b48"/><rect x="568.60" y="565.25" width="8.6" height="8.2" fill="#be4b48"/><line x1="50.500" x2="77.500" y1="350.5" y2="350.5" stroke="#4a7ebb" stroke-width="3" stroke-linecap="round"/><path d="M64 346.700l3.800 3.800l-3.800 3.800l-3.800-3.800z" fill="#4a7ebb"/><line x1="149.500" x2="176" y1="350.5" y2="350.5" stroke="#be4b48" stroke-width="3" stroke-linecap="round"/><rect x="159.300" y="347.300" width="6.500" height="6.500" fill="#be4b48"/><line x1="237.500" x2="264" y1="350.5" y2="350.5" stroke="#98b954" stroke-width="3" stroke-linecap="round"/><path d="M250.500 346.500l4 7h-8z" fill="#98b954"/><rect x="708" y="384" width="444.5" height="192" fill="#ebecee"/><line x1="704" x2="1153" y1="384.50" y2="384.50" stroke="#868686" stroke-width="1"/><line x1="704" x2="1153" y1="416.50" y2="416.50" stroke="#868686" stroke-width="1"/><line x1="704" x2="1153" y1="448.50" y2="448.50" stroke="#868686" stroke-width="1"/><line x1="704" x2="1153" y1="479.50" y2="479.50" stroke="#868686" stroke-width="1"/><line x1="704" x2="1153" y1="511.50" y2="511.50" stroke="#868686" stroke-width="1"/><line x1="704" x2="1153" y1="543.50" y2="543.50" stroke="#868686" stroke-width="1"/><line x1="704" x2="1153" y1="575.50" y2="575.50" stroke="#868686" stroke-width="1"/><line x1="708.5" x2="708.5" y1="384" y2="576" stroke="#868686" stroke-width="1"/><line x1="708.5" x2="708.5" y1="576" y2="579.5" stroke="#868686" stroke-width="1"/><line x1="740.5" x2="740.5" y1="576" y2="579.5" stroke="#868686" stroke-width="1"/><line x1="771.5" x2="771.5" y1="576" y2="579.5" stroke="#868686" stroke-width="1"/><line x1="803.5" x2="803.5" y1="576" y2="579.5" stroke="#868686" stroke-width="1"/><line x1="835.5" x2="835.5" y1="576" y2="579.5" stroke="#868686" stroke-width="1"/><line x1="867.5" x2="867.5" y1="576" y2="579.5" stroke="#868686" stroke-width="1"/><line x1="898.5" x2="898.5" y1="576" y2="579.5" stroke="#868686" stroke-width="1"/><line x1="930.5" x2="930.5" y1="576" y2="579.5" stroke="#868686" stroke-width="1"/><line x1="962.5" x2="962.5" y1="576" y2="579.5" stroke="#868686" stroke-width="1"/><line x1="994.5" x2="994.5" y1="576" y2="579.5" stroke="#868686" stroke-width="1"/><line x1="1025.5" x2="1025.5" y1="576" y2="579.5" stroke="#868686" stroke-width="1"/><line x1="1057.5" x2="1057.5" y1="576" y2="579.5" stroke="#868686" stroke-width="1"/><line x1="1089.5" x2="1089.5" y1="576" y2="579.5" stroke="#868686" stroke-width="1"/><line x1="1121.5" x2="1121.5" y1="576" y2="579.5" stroke="#868686" stroke-width="1"/><line x1="1152.5" x2="1152.5" y1="576" y2="579.5" stroke="#868686" stroke-width="1"/><polyline points="708.25,511.83 740.00,543.67 771.75,527.75 803.50,495.92 835.25,464.08 867.00,543.67 898.75,543.67 930.50,559.58 962.25,559.58 994.00,559.58 1025.75,543.67 1057.50,416.33 1089.25,543.67 1121.00,527.75 1152.75,495.92" fill="none" stroke="#4a7ebb" stroke-width="3" stroke-linejoin="round" stroke-linecap="round"/><path d="M708.25 507.13l4.7 4.7l-4.7 4.7l-4.7-4.7z" fill="#4a7ebb"/><path d="M740.00 538.97l4.7 4.7l-4.7 4.7l-4.7-4.7z" fill="#4a7ebb"/><path d="M771.75 523.05l4.7 4.7l-4.7 4.7l-4.7-4.7z" fill="#4a7ebb"/><path d="M803.50 491.22l4.7 4.7l-4.7 4.7l-4.7-4.7z" fill="#4a7ebb"/><path d="M835.25 459.38l4.7 4.7l-4.7 4.7l-4.7-4.7z" fill="#4a7ebb"/><path d="M867.00 538.97l4.7 4.7l-4.7 4.7l-4.7-4.7z" fill="#4a7ebb"/><path d="M898.75 538.97l4.7 4.7l-4.7 4.7l-4.7-4.7z" fill="#4a7ebb"/><path d="M930.50 554.88l4.7 4.7l-4.7 4.7l-4.7-4.7z" fill="#4a7ebb"/><path d="M962.25 554.88l4.7 4.7l-4.7 4.7l-4.7-4.7z" fill="#4a7ebb"/><path d="M994.00 554.88l4.7 4.7l-4.7 4.7l-4.7-4.7z" fill="#4a7ebb"/><path d="M1025.75 538.97l4.7 4.7l-4.7 4.7l-4.7-4.7z" fill="#4a7ebb"/><path d="M1057.50 411.63l4.7 4.7l-4.7 4.7l-4.7-4.7z" fill="#4a7ebb"/><path d="M1089.25 538.97l4.7 4.7l-4.7 4.7l-4.7-4.7z" fill="#4a7ebb"/><path d="M1121.00 523.05l4.7 4.7l-4.7 4.7l-4.7-4.7z" fill="#4a7ebb"/><path d="M1152.75 491.22l4.7 4.7l-4.7 4.7l-4.7-4.7z" fill="#4a7ebb"/><line x1="627.500" x2="652.500" y1="350" y2="350" stroke="#4a7ebb" stroke-width="3" stroke-linecap="round"/><path d="M640 346.200l3.800 3.800l-3.800 3.800l-3.800-3.800z" fill="#4a7ebb"/><rect x="1192.5" y="230.5" width="20" height="182" fill="none" stroke="#4f81bd" stroke-width="1.2"/><rect x="1192.5" y="423.5" width="20" height="240" fill="none" stroke="#f79646" stroke-width="1.2"/><path d="M44.5 191V290.5H884.5V191" fill="none" stroke="#000" stroke-width="1"/></svg>
<div class="t" style="left:30.80px;top:4.00px;font-size:12px;letter-spacing:0.052px;color:#595959;">Good Mail:</div>
<div class="t" style="left:201.80px;top:4.00px;font-size:12px;letter-spacing:-0.068px;color:#595959;">Number of messages that were received or sent and not identified as spam or malware</div>
<div class="t" style="left:30.80px;top:24.00px;font-size:12px;letter-spacing:-0.422px;color:#595959;">Spam:</div>
<div class="t" style="left:201.80px;top:24.00px;font-size:12px;letter-spacing:-0.083px;color:#595959;">Number of messages that were identified as spam</div>
<div class="t" style="left:30.80px;top:44.00px;font-size:12px;letter-spacing:-0.098px;color:#595959;">Malware:</div>
<div class="t" style="left:201.80px;top:44.00px;font-size:12px;letter-spacing:-0.024px;color:#595959;">Number of messages that contained malware</div>
<div class="t" style="left:30.80px;top:64.00px;font-size:12px;letter-spacing:-0.603px;color:#595959;">Rules:</div>
<div class="t" style="left:201.80px;top:64.00px;font-size:12px;letter-spacing:-0.057px;color:#595959;">Number of messages that matched at least one rule</div>
<div class="t" style="left:30.80px;top:84.00px;font-size:12px;letter-spacing:-0.729px;color:#595959;">DLP:</div>
<div class="t" style="left:201.80px;top:84.00px;font-size:12px;letter-spacing:-0.076px;color:#595959;">Number of messages that matched at least one DLP policy</div>
<div class="t" style="left:12.50px;top:125.50px;font-size:14px;letter-spacing:-0.286px;color:#7a7a7a;">Received Mail</div>
<div class="t" style="left:594.00px;top:124.75px;font-size:14px;letter-spacing:-0.232px;color:#7a7a7a;">Sent Mail</div>
<div class="t" style="left:13.50px;top:441.75px;font-size:14px;letter-spacing:-0.141px;color:#7a7a7a;">Top Recipients</div>
<div class="t" style="left:595.00px;top:441.75px;font-size:14px;letter-spacing:-0.261px;color:#7a7a7a;">Top Senders</div>
<div class="t" style="left:53.80px;top:151.50px;font-size:12px;letter-spacing:-0.025px;color:#595959;">Good Mail</div>
<div class="t" style="left:152.80px;top:151.50px;font-size:12px;letter-spacing:0.023px;color:#595959;">Malware</div>
<div class="t" style="left:240.80px;top:151.50px;font-size:12px;letter-spacing:-0.286px;color:#595959;">Spam</div>
<div class="t" style="left:630.50px;top:150.75px;font-size:12px;letter-spacing:-0.025px;color:#595959;">Good Mail</div>
<div class="t" style="left:49.80px;top:186.00px;font-size:12px;letter-spacing:-0.383px;color:#595959;">900.0</div>
<div class="t" style="left:49.80px;top:207.00px;font-size:12px;letter-spacing:-0.383px;color:#595959;">800.0</div>
<div class="t" style="left:49.80px;top:227.00px;font-size:12px;letter-spacing:-0.383px;color:#595959;">700.0</div>
<div class="t" style="left:49.80px;top:248.00px;font-size:12px;letter-spacing:-0.383px;color:#595959;">600.0</div>
<div class="t" style="left:49.80px;top:269.00px;font-size:12px;letter-spacing:-0.383px;color:#595959;">500.0</div>
<div class="t" style="left:49.80px;top:290.00px;font-size:12px;letter-spacing:-0.383px;color:#595959;">400.0</div>
<div class="t" style="left:49.80px;top:310.00px;font-size:12px;letter-spacing:-0.383px;color:#595959;">300.0</div>
<div class="t" style="left:49.80px;top:331.00px;font-size:12px;letter-spacing:-0.383px;color:#595959;">200.0</div>
<div class="t" style="left:49.80px;top:352.00px;font-size:12px;letter-spacing:-0.383px;color:#595959;">100.0</div>
<div class="t" style="left:62.00px;top:372.00px;font-size:12px;letter-spacing:-0.194px;color:#595959;">0.0</div>
<div class="t" style="left:648.75px;top:186.00px;font-size:12px;letter-spacing:-0.170px;color:#595959;">12.0</div>
<div class="t" style="left:648.75px;top:217.00px;font-size:12px;letter-spacing:-0.170px;color:#595959;">10.0</div>
<div class="t" style="left:655.30px;top:249.00px;font-size:12px;letter-spacing:-0.194px;color:#595959;">8.0</div>
<div class="t" style="left:655.30px;top:281.00px;font-size:12px;letter-spacing:-0.194px;color:#595959;">6.0</div>
<div class="t" style="left:655.30px;top:313.00px;font-size:12px;letter-spacing:-0.194px;color:#595959;">4.0</div>
<div class="t" style="left:655.30px;top:345.00px;font-size:12px;letter-spacing:-0.194px;color:#595959;">2.0</div>
<div class="t" style="left:655.30px;top:376.00px;font-size:12px;letter-spacing:-0.194px;color:#595959;">0.0</div>
<div class="t" style="left:62.90px;top:390.00px;font-size:12px;letter-spacing:0.151px;color:#595959;">6/30/2017</div>
<div class="t" style="left:655.45px;top:394.00px;font-size:12px;letter-spacing:0.151px;color:#595959;">6/30/2017</div>
<div class="t" style="left:131.30px;top:390.00px;font-size:12px;letter-spacing:0.269px;color:#595959;">7/2/2017</div>
<div class="t" style="left:721.95px;top:394.00px;font-size:12px;letter-spacing:0.269px;color:#595959;">7/2/2017</div>
<div class="t" style="left:196.70px;top:390.00px;font-size:12px;letter-spacing:0.269px;color:#595959;">7/4/2017</div>
<div class="t" style="left:785.45px;top:394.00px;font-size:12px;letter-spacing:0.269px;color:#595959;">7/4/2017</div>
<div class="t" style="left:262.10px;top:390.00px;font-size:12px;letter-spacing:0.269px;color:#595959;">7/6/2017</div>
<div class="t" style="left:848.95px;top:394.00px;font-size:12px;letter-spacing:0.269px;color:#595959;">7/6/2017</div>
<div class="t" style="left:327.50px;top:390.00px;font-size:12px;letter-spacing:0.269px;color:#595959;">7/8/2017</div>
<div class="t" style="left:912.45px;top:394.00px;font-size:12px;letter-spacing:0.269px;color:#595959;">7/8/2017</div>
<div class="t" style="left:389.77px;top:390.00px;font-size:12px;letter-spacing:0.182px;color:#595959;">7/10/2017</div>
<div class="t" style="left:972.83px;top:394.00px;font-size:12px;letter-spacing:0.182px;color:#595959;">7/10/2017</div>
<div class="t" style="left:455.18px;top:390.00px;font-size:12px;letter-spacing:0.182px;color:#595959;">7/12/2017</div>
<div class="t" style="left:1036.33px;top:394.00px;font-size:12px;letter-spacing:0.182px;color:#595959;">7/12/2017</div>
<div class="t" style="left:520.58px;top:390.00px;font-size:12px;letter-spacing:0.182px;color:#595959;">7/14/2017</div>
<div class="t" style="left:1099.83px;top:394.00px;font-size:12px;letter-spacing:0.182px;color:#595959;">7/14/2017</div>
<div class="t" style="left:12.90px;top:-203.00px;font-size:12px;letter-spacing:-0.529px;color:#595959;transform-origin:25.50px 8px;transform:rotate(-90deg);top:278.50px;">Messages</div>
<div class="t" style="left:613.30px;top:-203.00px;font-size:12px;letter-spacing:-0.529px;color:#595959;transform-origin:25.50px 8px;transform:rotate(-90deg);top:281.00px;">Messages</div>
</div>
<div id="tabs" class="a" style="left:0px;top:645px;width:1201px;height:27px;background:#e6e6e6;overflow:hidden;">
<svg class="a" style="left:0;top:0" width="1201" height="27" viewBox="0 645 1201 27"><rect x="0" y="645" width="1201" height="1" fill="#ababab"/><rect x="100" y="645" width="64" height="23" fill="#fff"/><rect x="99" y="668" width="65" height="2" fill="#217346"/><rect x="163" y="645" width="1" height="23" fill="#ababab"/><rect x="221.0" y="649" width="1" height="19" fill="#a6a6a6"/><rect x="297.0" y="649" width="1" height="19" fill="#a6a6a6"/><rect x="354.0" y="649" width="1" height="19" fill="#a6a6a6"/><rect x="509.0" y="649" width="1" height="19" fill="#a6a6a6"/><rect x="639.0" y="649" width="1" height="19" fill="#a6a6a6"/><rect x="787.0" y="649" width="1" height="19" fill="#a6a6a6"/><rect x="910.0" y="649" width="1" height="19" fill="#a6a6a6"/><path d="M30 655l-3.500 3.500l3.500 3.500z" fill="#c6c6c6"/><path d="M55 655l3.500 3.500l-3.500 3.500z" fill="#1e6b41"/><circle cx="1014.200" cy="659" r="7" fill="none" stroke="#777" stroke-width="1.100"/><path d="M1010 659h8.400M1014.200 654.800v8.400" stroke="#777" stroke-width="1.300"/><rect x="1042.300" y="654.8" width="1.400" height="1.400" fill="#aaa"/><rect x="1042.300" y="658.8" width="1.400" height="1.400" fill="#aaa"/><rect x="1042.300" y="662.8" width="1.400" height="1.400" fill="#aaa"/><rect x="1059.500" y="652.500" width="160" height="14" fill="#fff" stroke="#ababab"/><path d="M1073.500 652.500v14" stroke="#ababab"/><path d="M1068.500 656l-4 3.500l4 3.500z" fill="#555"/></svg>
<div class="t" style="left:111.30px;top:5.75px;font-size:12.5px;letter-spacing:0.464px;color:#217346;font-weight:bold;">Traffic</div>
<div class="t" style="left:175.00px;top:5.60px;font-size:12.5px;letter-spacing:0.048px;color:#444;">Spam</div>
<div class="t" style="left:233.75px;top:5.60px;font-size:12.5px;letter-spacing:0.508px;color:#444;">Malware</div>
<div class="t" style="left:310.00px;top:5.60px;font-size:12.5px;letter-spacing:-0.230px;color:#444;">Rules</div>
<div class="t" style="left:370.00px;top:5.60px;font-size:12.5px;letter-spacing:0.147px;color:#444;">Data Loss Prevention</div>
<div class="t" style="left:523.90px;top:5.60px;font-size:12.5px;letter-spacing:0.308px;color:#444;">Spam Mail Detail</div>
<div class="t" style="left:655.00px;top:5.60px;font-size:12.5px;letter-spacing:0.416px;color:#444;">Malware Mail Detail</div>
<div class="t" style="left:802.75px;top:5.60px;font-size:12.5px;letter-spacing:0.261px;color:#444;">Rule Mail Detail</div>
<div class="t" style="left:925.80px;top:5.60px;font-size:12.5px;letter-spacing:0.064px;color:#444;">DLP Mai</div>
<div class="t" style="left:981.30px;top:6.10px;font-size:13px;letter-spacing:0.078px;color:#217346;font-weight:bold;">...</div>
</div>
</body></html>
